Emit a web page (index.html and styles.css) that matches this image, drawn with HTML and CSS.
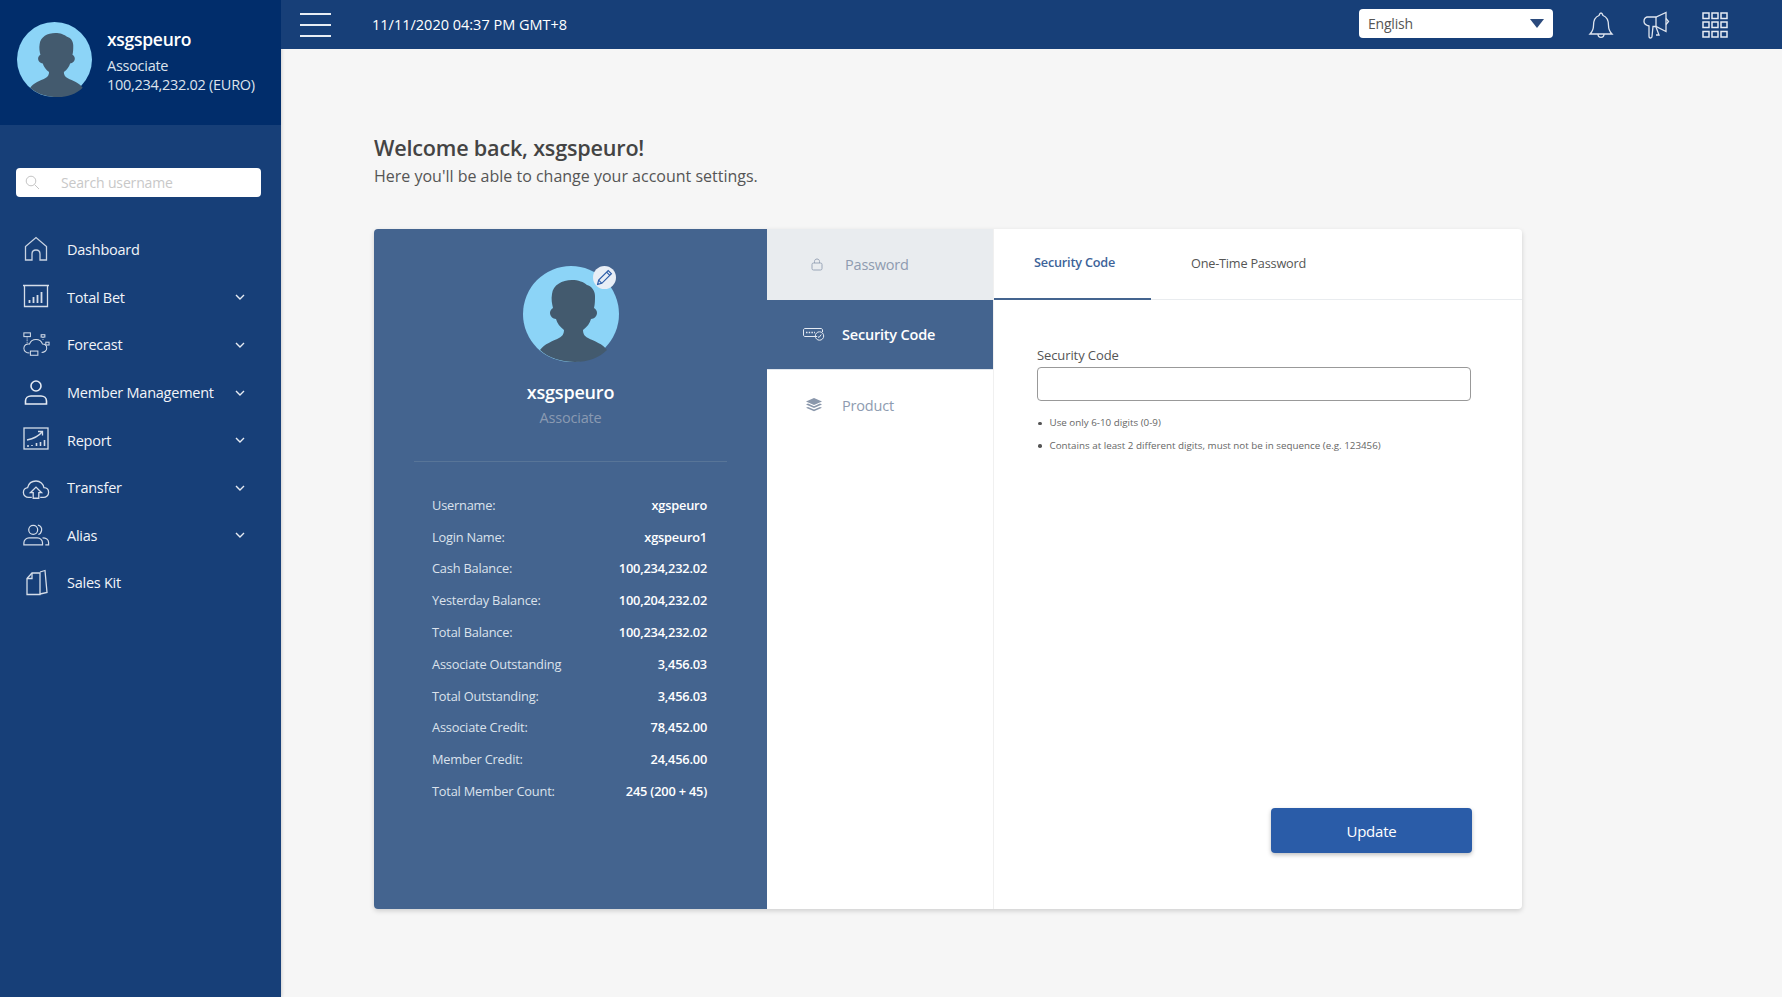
FILE: index.html
```html
<!DOCTYPE html>
<html lang="en">
<head>
    <meta charset="UTF-8">
    <meta name="viewport" content="width=device-width, initial-scale=1.0">
    <title>Account Settings</title>
    <link rel="stylesheet" href="styles.css">
</head>
<body>
    <svg class="defs" width="0" height="0">
        <symbol id="person" viewBox="0 0 96 96">
            <circle cx="48" cy="48" r="48" fill="#8cd4f7"/>
            <path fill="#435a6e" d="M17 84c4-6 13-9 19-12 4-2 5-5 5-8-4-3-7-7-8-11-3 0-6-3-6-6 0-2 1-4 3-5-1-4-2-9-1-14 1-9 10-14 20-14 6 0 12 2 15 5 4 1 8 5 8 11 0 4 0 8-1 12 2 1 3 3 3 5 0 3-3 6-6 6-1 4-4 8-8 11 0 3 1 6 5 8 6 3 15 6 19 12-8 8-19 12-32 12s-27-4-35-12z"/>
        </symbol>
    </svg>

    <div class="app">
        <aside class="sidebar">
            <div class="profile">
                <svg class="profile-pic"><use href="#person"/></svg>
                <div class="profile-text">
                    <div class="profile-name">xsgspeuro</div>
                    <div>Associate</div>
                    <div>100,234,232.02 (EURO)</div>
                </div>
            </div>

            <div class="search">
                <svg width="15" height="15" viewBox="0 0 15 15" fill="none" stroke="#c4c4c4" stroke-width="1"><circle cx="6" cy="6" r="4.8"/><path d="M9.6 9.6l4.4 4.4"/></svg>
                <span>Search username</span>
            </div>

            <nav class="menu">
                <a class="menu-item">
                    <svg class="menu-icon" viewBox="0 0 28 28" fill="none" stroke="#c9d3e2" stroke-width="1.3"><path d="M3.5 24V10.500L14 1.500l10.500 9V24H18v-6c0-2.500-1.800-4-4-4s-4 1.500-4 4v6z"/></svg>
                    <span class="menu-label">Dashboard</span>
                </a>
                <a class="menu-item">
                    <svg class="menu-icon" viewBox="0 0 28 28" fill="none" stroke="#d5dde9" stroke-width="1.3"><path d="M1 2.500h26M2.500 2.500v21h23v-21"/><path stroke-width="1.800" d="M7.500 20v-3M11.500 20v-6M15.500 20v-8M19.500 20v-11"/></svg>
                    <span class="menu-label">Total Bet</span>
                    <svg class="chevron" viewBox="0 0 10 6" fill="none" stroke="#e6ebf3" stroke-width="1.400"><path d="M1 1l4 4 4-4"/></svg>
                </a>
                <a class="menu-item">
                    <svg class="menu-icon" viewBox="0 0 30 28" fill="none" stroke="#d5dde9" stroke-width="1.100"><path d="M8 22.500c-3 0-6-1.500-6-5s3-5 6-4.500c1-3 4-5 7-5 4 0 6 2 7 5 3 0 4.500 2 4.500 4.500S24 22 21 22"/><rect x="2" y="1" width="7" height="4" fill="#173f78"/><rect x="20.500" y="3" width="4" height="2.500"/><rect x="25.500" y="11" width="3.500" height="3" fill="#173f78"/><rect x="9" y="20.500" width="8" height="4.500" fill="#173f78"/><path stroke-dasharray="1 1" d="M5.500 5v7M22.500 5.500v4"/></svg>
                    <span class="menu-label">Forecast</span>
                    <svg class="chevron" viewBox="0 0 10 6" fill="none" stroke="#e6ebf3" stroke-width="1.400"><path d="M1 1l4 4 4-4"/></svg>
                </a>
                <a class="menu-item">
                    <svg class="menu-icon" viewBox="0 0 28 28" fill="none" stroke="#e6ebf3" stroke-width="1.600"><circle cx="14" cy="7" r="5"/><path d="M3.500 25v-3c0-3 2.500-5 5.500-5h10c3 0 5.500 2 5.500 5v3z"/></svg>
                    <span class="menu-label">Member Management</span>
                    <svg class="chevron" viewBox="0 0 10 6" fill="none" stroke="#e6ebf3" stroke-width="1.400"><path d="M1 1l4 4 4-4"/></svg>
                </a>
                <a class="menu-item">
                    <svg class="menu-icon" viewBox="0 0 28 28" fill="none" stroke="#d5dde9" stroke-width="1.300"><rect x="2" y="2" width="24" height="21"/><path d="M5 14c5-1 11-3 15-8M16 5.500l4.500 0 0 4"/><path stroke-width="1.600" d="M5 20h2M10 20v-1M14.500 20v-3M18.500 20v-4M22.500 20v-6"/></svg>
                    <span class="menu-label">Report</span>
                    <svg class="chevron" viewBox="0 0 10 6" fill="none" stroke="#e6ebf3" stroke-width="1.400"><path d="M1 1l4 4 4-4"/></svg>
                </a>
                <a class="menu-item">
                    <svg class="menu-icon" viewBox="0 0 30 28" fill="none" stroke="#d5dde9" stroke-width="1.400"><path d="M10.500 24H7c-3 0-5.500-2.200-5.500-5.200 0-2.600 2-4.800 4.500-5.200C7 9.500 10.500 6.500 15 6.500c4.500 0 8 3 8.500 7.200 3 .1 5 2.300 5 5 0 3-2.500 5.300-5.500 5.300h-3.500"/><path d="M12 25v-6H9l6-6 6 6h-3v6z"/></svg>
                    <span class="menu-label">Transfer</span>
                    <svg class="chevron" viewBox="0 0 10 6" fill="none" stroke="#e6ebf3" stroke-width="1.400"><path d="M1 1l4 4 4-4"/></svg>
                </a>
                <a class="menu-item">
                    <svg class="menu-icon" viewBox="0 0 30 28" fill="none" stroke="#d5dde9" stroke-width="1.300"><circle cx="12" cy="8.500" r="4.800"/><path d="M2 24.500v-2c0-3 2.500-5.500 5.500-5.500h9c3 0 5.500 2.500 5.500 5.500v2z"/><path d="M17 3.500c3 .5 4.500 3 4 5.500s-1.500 4-3.500 4.500M22 17c3.500 0 6.500 2 6.500 5v2.500H25"/></svg>
                    <span class="menu-label">Alias</span>
                    <svg class="chevron" viewBox="0 0 10 6" fill="none" stroke="#e6ebf3" stroke-width="1.400"><path d="M1 1l4 4 4-4"/></svg>
                </a>
                <a class="menu-item">
                    <svg class="menu-icon" viewBox="0 0 28 28" fill="none" stroke="#d5dde9" stroke-width="1.300"><path d="M5 9.500L10 4h8v21.500H5z"/><path d="M10 4v5.500H5"/><path d="M18 3l5-1.500 2 22-7 1.500"/></svg>
                    <span class="menu-label">Sales Kit</span>
                </a>
            </nav>
        </aside>

        <div class="main">
            <header class="topbar">
                <div class="burger"><span></span><span></span><span></span></div>
                <div class="clock">11/11/2020 04:37 PM GMT+8</div>
                <div class="topbar-right">
                    <div class="lang">
                        <span>English</span>
                        <i class="lang-arrow"></i>
                    </div>
                    <svg class="top-icon" viewBox="0 0 26 28" fill="none" stroke="#dfe5ef" stroke-width="1.300"><path d="M2 23c2-2 3.500-4 3.500-8.500C5.500 9 8 5.500 11 4.500c.5-1.500 1-2.500 2-2.500s1.500 1 2 2.500c3 1 5.500 4.500 5.500 10 0 4.500 1.500 6.500 3.500 8.500z"/><path d="M10 23c0 2 1.300 3.300 3 3.300s3-1.300 3-3.300"/></svg>
                    <svg class="top-icon icon-horn" viewBox="0 0 30 28" fill="none" stroke="#dfe5ef" stroke-width="1.300"><path d="M5 6h9L24 1.500v19L14 15.500h-3l-1 10c0 1-.5 1.500-1.500 1.500s-1.500-.5-1.500-2V15c-2-.5-5-2-5-4.500S3 6.500 5 6z"/><path d="M14 6v9.500M24 7.500l2.500 3-2.500 3M14 16l3 8h-3"/></svg>
                    <svg class="top-icon icon-grid" viewBox="0 0 26 26" fill="none" stroke="#e6ebf3" stroke-width="1.500"><rect x="1" y="1" width="6" height="5.500"/><rect x="10" y="1" width="6" height="5.500"/><rect x="19" y="1" width="6" height="5.500"/><rect x="1" y="10" width="6" height="5.500"/><rect x="10" y="10" width="6" height="5.500"/><rect x="19" y="10" width="6" height="5.500"/><rect x="1" y="19.500" width="6" height="5.500"/><rect x="10" y="19.500" width="6" height="5.500"/><rect x="19" y="19.500" width="6" height="5.500"/></svg>
                </div>
            </header>

            <main class="content">
                <h1 class="welcome">Welcome back, xsgspeuro!</h1>
                <p class="welcome-sub">Here you'll be able to change your account settings.</p>

                <section class="card">
                    <div class="account">
                        <div class="account-pic">
                            <svg class="account-avatar"><use href="#person"/></svg>
                            <span class="edit-badge">
                                <svg width="17" height="17" viewBox="0 0 16 16" fill="none" stroke="#2b5ca8" stroke-width="1.100"><path d="M1.500 14.500l1-4L11.500 1.500l3 3-9 9zM2.500 10.500l3 3M10 3l3 3"/></svg>
                            </span>
                        </div>
                        <div class="account-name">xsgspeuro</div>
                        <div class="account-role">Associate</div>
                        <dl class="stats">
                            <div class="stat"><dt>Username:</dt><dd>xgspeuro</dd></div>
                            <div class="stat"><dt>Login Name:</dt><dd>xgspeuro1</dd></div>
                            <div class="stat"><dt>Cash Balance:</dt><dd>100,234,232.02</dd></div>
                            <div class="stat"><dt>Yesterday Balance:</dt><dd>100,204,232.02</dd></div>
                            <div class="stat"><dt>Total Balance:</dt><dd>100,234,232.02</dd></div>
                            <div class="stat"><dt>Associate Outstanding</dt><dd>3,456.03</dd></div>
                            <div class="stat"><dt>Total Outstanding:</dt><dd>3,456.03</dd></div>
                            <div class="stat"><dt>Associate Credit:</dt><dd>78,452.00</dd></div>
                            <div class="stat"><dt>Member Credit:</dt><dd>24,456.00</dd></div>
                            <div class="stat"><dt>Total Member Count:</dt><dd>245 (200 + 45)</dd></div>
                        </dl>
                    </div>

                    <div class="side-tabs">
                        <a class="side-tab side-tab-grey">
                            <svg class="lock-icon" width="12" height="13" viewBox="0 0 12 13" fill="none" stroke="#9aa6b8" stroke-width="1"><rect x="1" y="5" width="10" height="7" rx="1.500"/><path d="M3.500 5V3.500C3.500 2 4.500 1 6 1s2.500 1 2.500 2.500V5"/></svg>
                            <span>Password</span>
                        </a>
                        <a class="side-tab side-tab-active">
                            <svg class="code-icon" width="22" height="13" viewBox="0 0 22 13" fill="none" stroke="#e6ebf3" stroke-width="1"><path d="M14 8.500H2c-.8 0-1.500-.6-1.500-1.500V2C.5 1.200 1.200.5 2 .5h16c.8 0 1.500.7 1.500 1.500v2"/><path stroke-width="1.600" stroke-dasharray="1.500 1.200" d="M3 4.500h9"/><circle cx="16.500" cy="8" r="4.200"/><path d="M14.800 8.500l1.200 1 2.300-3"/></svg>
                            <span>Security Code</span>
                        </a>
                        <a class="side-tab">
                            <svg class="layers-icon" width="16" height="15" viewBox="0 0 16 15" fill="#8a97ab"><path d="M8 0l8 3.500L8 7 0 3.500z"/><path d="M0 6.500L2 5.600 8 8.300l6-2.700 2 .9L8 10z"/><path d="M0 9.800l2-.9 6 2.700 6-2.700 2 .9L8 13.300z"/></svg>
                            <span>Product</span>
                        </a>
                    </div>

                    <div class="form-pane">
                        <div class="top-tabs">
                            <a class="top-tab top-tab-active">Security Code</a>
                            <a class="top-tab">One-Time Password</a>
                        </div>
                        <form class="code-form">
                            <label for="code">Security Code</label>
                            <input type="text" id="code">
                            <ul class="rules">
                                <li>Use only 6-10 digits (0-9)</li>
                                <li>Contains at least 2 different digits, must not be in sequence (e.g. 123456)</li>
                            </ul>
                            <button type="button" class="update-button">Update</button>
                        </form>
                    </div>
                </section>
            </main>
        </div>
    </div>
</body>
</html>
```

FILE: styles.css
```css
* {
    box-sizing: border-box;
}

body {
    font-family: 'Open Sans', 'Noto Sans', sans-serif;
    margin: 0;
    padding: 0;
    background-color: #f6f6f6;
    color: #444;
}

.defs {
    position: absolute;
}

.app {
    display: flex;
    height: 997px;
    overflow: hidden;
}

/* sidebar */
.sidebar {
    width: 281px;
    flex-shrink: 0;
    background-color: #173f78;
    box-shadow: 1px 0 3px rgba(0, 0, 0, 0.15);
    color: #fff;
}

.profile {
    display: flex;
    align-items: center;
    height: 125px;
    padding: 0 0 0 17px;
    background-color: #012d6b;
}

.profile-pic {
    width: 75px;
    height: 75px;
    margin-top: -6px;
    margin-right: 15px;
}

.profile-text {
    margin-top: -4px;
    font-size: 14.5px;
    line-height: 19px;
    letter-spacing: -0.28px;
    color: #dde3ec;
}

.profile-name {
    font-size: 17.5px;
    font-weight: 600;
    line-height: 22px;
    margin-bottom: 6px;
    color: #fff;
}

.search {
    display: flex;
    align-items: center;
    height: 29px;
    margin: 43px 20px 0 16px;
    padding-left: 9px;
    background-color: #fff;
    border-radius: 4px;
    font-size: 14px;
    letter-spacing: -0.15px;
    color: #c8c8c8;
}

.search svg {
    margin-right: 21px;
}

.menu {
    margin-top: 29px;
}

.menu-item {
    display: flex;
    align-items: center;
    height: 47.6px;
    padding: 0 36px 0 22px;
    font-size: 14.5px;
    letter-spacing: -0.25px;
    color: #f2f4f8;
}

.menu-icon {
    width: 28px;
    height: 28px;
    margin-right: 17px;
    flex-shrink: 0;
}

.menu-label {
    flex: 1;
}

.chevron {
    width: 10px;
    height: 6px;
}

/* top bar */
.main {
    flex: 1;
    display: flex;
    flex-direction: column;
    min-width: 0;
}

.topbar {
    display: flex;
    align-items: center;
    height: 49px;
    flex-shrink: 0;
    padding: 0 54px 0 19px;
    background-color: #173f78;
    color: #fff;
}

.burger {
    display: flex;
    flex-direction: column;
    gap: 9px;
    width: 31px;
    margin-right: 41px;
}

.burger span {
    display: block;
    height: 2px;
    background-color: #e8edf4;
}

.clock {
    font-size: 14.5px;
}

.topbar-right {
    display: flex;
    align-items: center;
    margin-left: auto;
}

.lang {
    display: flex;
    align-items: center;
    justify-content: space-between;
    width: 194px;
    height: 29px;
    margin-top: -3px;
    padding: 0 9px;
    background-color: #fff;
    border-radius: 4px;
    font-size: 14px;
    letter-spacing: -0.2px;
    color: #555;
}

.lang-arrow {
    width: 0;
    height: 0;
    border-left: 7px solid transparent;
    border-right: 7px solid transparent;
    border-top: 9px solid #2b4a7c;
}

.top-icon {
    width: 26px;
    height: 28px;
    margin-left: 35px;
}

.icon-horn {
    width: 30px;
    margin-left: 28px;
}

.icon-grid {
    margin-left: 30px;
}

/* content */
.content {
    flex: 1;
    padding: 85px 0 0 93px;
}

.welcome {
    margin: 0;
    font-size: 21.6px;
    line-height: 28px;
    font-weight: 600;
    letter-spacing: -0.2px;
    color: #444;
}

.welcome-sub {
    margin: 2px 0 0;
    font-size: 16px;
    line-height: 24px;
    color: #555;
}

.card {
    display: flex;
    width: 1148px;
    height: 680px;
    margin-top: 41px;
    background-color: #fff;
    border-radius: 4px;
    box-shadow: 0 2px 5px rgba(0, 0, 0, 0.16);
    overflow: hidden;
}

.account {
    width: 393px;
    flex-shrink: 0;
    padding-top: 37px;
    background-color: #44648f;
    color: #fff;
    text-align: center;
}

.account-pic {
    position: relative;
    width: 96px;
    height: 96px;
    margin: 0 auto;
}

.account-avatar {
    width: 96px;
    height: 96px;
}

.edit-badge {
    position: absolute;
    top: 0;
    right: 3px;
    display: flex;
    align-items: center;
    justify-content: center;
    width: 23px;
    height: 23px;
    background-color: #e8eef6;
    border-radius: 50%;
}

.account-name {
    margin-top: 18px;
    font-size: 18px;
    line-height: 24px;
    font-weight: 600;
    letter-spacing: -0.2px;
}

.account-role {
    margin-top: 4px;
    font-size: 14.5px;
    line-height: 20px;
    letter-spacing: -0.2px;
    color: #8a9ab2;
}

.stats {
    margin: 33px 40px 0 40px;
    padding: 27px 20px 0 18px;
    border-top: 1px solid #587598;
}

.stat {
    display: flex;
    justify-content: space-between;
    align-items: center;
    height: 31.8px;
    font-size: 12.8px;
    letter-spacing: -0.2px;
}

.stat dt {
    color: #dbe2ec;
}

.stat dd {
    margin: 0;
    font-weight: 600;
    color: #fff;
}

.side-tabs {
    width: 227px;
    flex-shrink: 0;
    border-right: 1px solid #f0f0f0;
}

.side-tab {
    display: flex;
    align-items: center;
    height: 70.5px;
    padding-left: 36px;
    font-size: 14.5px;
    letter-spacing: -0.2px;
    color: #8e9bb0;
}

.side-tab span {
    margin-left: 20px;
}

.side-tab-grey {
    background-color: #e9ecef;
}

.side-tab-grey span {
    margin-left: 22px;
}

.lock-icon {
    margin-left: 8px;
}

.side-tab-active {
    background-color: #44648f;
    color: #fff;
    font-weight: 600;
    border-bottom: 1px solid #dfe5ec;
}

.side-tab-active span {
    margin-left: 17px;
}

.layers-icon {
    margin-left: 3px;
}

.form-pane {
    flex: 1;
    display: flex;
    flex-direction: column;
    min-width: 0;
}

.top-tabs {
    display: flex;
    height: 71px;
    flex-shrink: 0;
    border-bottom: 1px solid #e9ecef;
}

.top-tab {
    display: flex;
    align-items: center;
    padding: 0 37px 3px 40px;
    margin-bottom: -1px;
    font-size: 12.7px;
    letter-spacing: -0.2px;
    white-space: nowrap;
    color: #555;
}

.top-tab-active {
    width: 157px;
    color: #3d6399;
    font-weight: 600;
    border-bottom: 2px solid #44648f;
}

.code-form {
    flex: 1;
    display: flex;
    flex-direction: column;
    padding: 46px 51px 0 43px;
}

.code-form label {
    display: block;
    font-size: 13px;
    line-height: 18px;
    letter-spacing: -0.1px;
    color: #555;
}

.code-form input {
    width: 100%;
    height: 34px;
    margin-top: 3px;
    border: 1px solid #999;
    border-radius: 4px;
    background-color: #fff;
}

.rules {
    margin: 11px 0 0;
    padding: 0 0 0 1px;
    list-style: none;
    font-size: 9.8px;
    line-height: 22.500px;
    color: #666;
}

.rules li {
    display: flex;
    align-items: center;
}

.rules li::before {
    content: '';
    width: 3.5px;
    height: 3.5px;
    margin-right: 8px;
    background-color: #555;
    border-radius: 50%;
}

.update-button {
    align-self: flex-end;
    width: 201px;
    height: 45px;
    margin-top: 351px;
    margin-right: -1px;
    padding: 0;
    background-color: #2a5ca8;
    color: #fff;
    border: none;
    border-radius: 4px;
    box-shadow: 0 2px 4px rgba(0, 0, 0, 0.25);
    font-family: inherit;
    font-size: 15px;
    letter-spacing: -0.2px;
}
```
